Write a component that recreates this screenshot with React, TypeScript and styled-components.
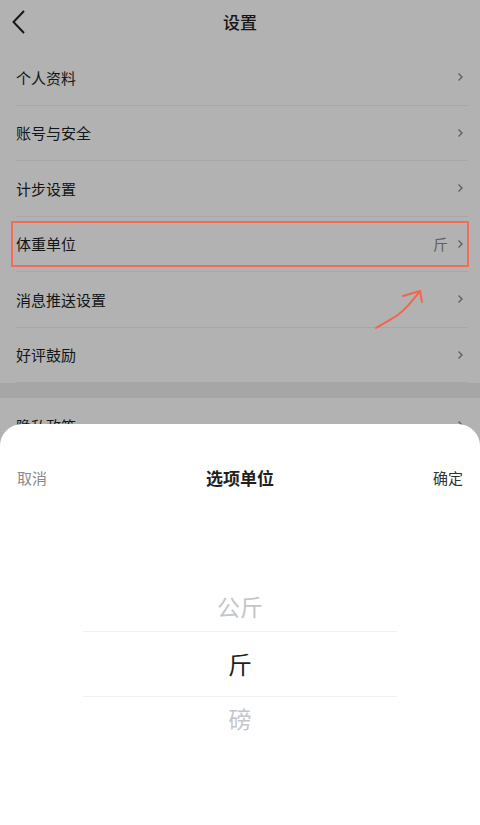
import React from "react";
import styled, { createGlobalStyle } from "styled-components";

const GlobalStyle = createGlobalStyle`
  html, body {
    margin: 0;
    padding: 0;
    background: #fff;
  }
  body {
    font-family: "Noto Sans CJK SC", "Noto Sans", sans-serif;
  }
`;

interface rowProps {
  label: string;
  value?: string;
  marked?: boolean;
}

const rows: rowProps[] = [
  { label: "个人资料" },
  { label: "账号与安全" },
  { label: "计步设置" },
  { label: "体重单位", value: "斤", marked: true },
  { label: "消息推送设置" },
  { label: "好评鼓励" },
];

const Chevron = () => (
  <svg width="7" height="10" viewBox="0 0 7 10">
    <path d="M1.5 1.5 L5 5 L1.5 8.5" fill="none" stroke="#8a8a8a" strokeWidth="1.4" />
  </svg>
);

const SettingRow: React.FC<rowProps> = ({ label, value, marked }) => {
  return (
    <RowDiv>
      <span className="rowLabel">{label}</span>
      <RowRight>
        {value && <span className="rowValue">{value}</span>}
        <Chevron />
      </RowRight>
      {marked && <MarkBox />}
    </RowDiv>
  );
};

const App: React.FC = () => {
  const options = ["公斤", "斤", "磅"];
  const selected = 1;
  return (
    <Screen>
      <GlobalStyle />
      <TopBar>
        <BackBtn>
          <svg width="16" height="26" viewBox="0 0 16 26">
            <path d="M13 2 L2.5 13 L13 24" fill="none" stroke="#222" strokeWidth="2" />
          </svg>
        </BackBtn>
        <h1>设置</h1>
      </TopBar>
      <List>
        {rows.map((r) => (
          <SettingRow key={r.label} {...r} />
        ))}
      </List>
      <SectionGap />
      <List>
        <SettingRow label="隐私政策" />
      </List>

      <Mask />

      <Arrow width="60" height="50" viewBox="0 0 60 50">
        <path
          d="M3 42 C12 36 20 33 26 28 C34 22 40 14 47 5"
          fill="none"
          stroke="#f2664f"
          strokeWidth="2"
          strokeLinecap="round"
        />
        <path
          d="M30 10 L47 5 L49 16"
          fill="none"
          stroke="#f2664f"
          strokeWidth="2"
          strokeLinecap="round"
          strokeLinejoin="round"
        />
      </Arrow>

      <Sheet>
        <SheetHead>
          <span className="cancel">取消</span>
          <span className="title">选项单位</span>
          <span className="ok">确定</span>
        </SheetHead>
        <Picker>
          {options.map((o, i) => (
            <PickItem key={o} active={i === selected}>
              {o}
            </PickItem>
          ))}
        </Picker>
      </Sheet>
    </Screen>
  );
};

export default App;

const Screen = styled.div`
  position: relative;
  width: 480px;
  height: 825px;
  overflow: hidden;
  background: #fff;
`;

const TopBar = styled.div`
  position: relative;
  height: 50px;
  display: flex;
  align-items: center;
  justify-content: center;
  h1 {
    margin: 0;
    font-size: 17px;
    font-weight: 500;
    color: #1f1f1f;
    margin-top: -7px;
  }
`;

const BackBtn = styled.div`
  position: absolute;
  left: 11px;
  top: 9px;
  display: flex;
`;

const List = styled.div`
  display: flex;
  flex-direction: column;
`;

const RowDiv = styled.div`
  position: relative;
  height: 55.5px;
  box-sizing: border-box;
  margin: 0 12px 0 16px;
  display: flex;
  align-items: center;
  justify-content: space-between;
  border-bottom: 1px solid #f0f0f0;
  .rowLabel {
    font-size: 15px;
    color: #1c1f24;
  }
`;

const RowRight = styled.div`
  display: flex;
  align-items: center;
  gap: 9px;
  padding-right: 4px;
  .rowValue {
    font-size: 15px;
    color: #8d8d8d;
  }
`;

const MarkBox = styled.div`
  position: absolute;
  z-index: 2;
  left: -5px;
  right: -1px;
  top: 4px;
  bottom: 4px;
  border: 2px solid #f36b5a;
`;

const SectionGap = styled.div`
  height: 15px;
  background: #eeeeee;
`;

const Mask = styled.div`
  position: absolute;
  z-index: 1;
  inset: 0;
  background: rgba(0, 0, 0, 0.3);
`;

const Arrow = styled.svg`
  position: absolute;
  z-index: 2;
  left: 373px;
  top: 286px;
`;

const Sheet = styled.div`
  position: absolute;
  z-index: 3;
  left: 0;
  right: 0;
  bottom: 0;
  height: 401px;
  background: #fff;
  border-radius: 22px 22px 0 0;
  display: flex;
  flex-direction: column;
`;

const SheetHead = styled.div`
  display: flex;
  align-items: center;
  justify-content: space-between;
  padding: 40px 17px 0 17px;
  height: 26px;
  .cancel {
    font-size: 15px;
    color: #8a8a8a;
  }
  .title {
    font-size: 17px;
    font-weight: 700;
    color: #1f1f1f;
  }
  .ok {
    font-size: 15px;
    color: #333;
  }
`;

const Picker = styled.div`
  margin: 95px 83px 0 83px;
  display: flex;
  flex-direction: column;
`;

const PickItem = styled.div<{ active: boolean }>`
  display: flex;
  align-items: center;
  justify-content: center;
  box-sizing: border-box;
  height: ${(p) => (p.active ? "66px" : "46px")};
  font-size: ${(p) => (p.active ? "24px" : "23px")};
  line-height: 1;
  color: ${(p) => (p.active ? "#1c1f24" : "#c4c6ca")};
  border-top: ${(p) => (p.active ? "1px solid #f1f1f1" : "none")};
  border-bottom: ${(p) => (p.active ? "1px solid #f1f1f1" : "none")};
  &:first-child {
    padding-bottom: 3px;
  }
  &:last-child {
    padding-bottom: 4px;
  }
`;
